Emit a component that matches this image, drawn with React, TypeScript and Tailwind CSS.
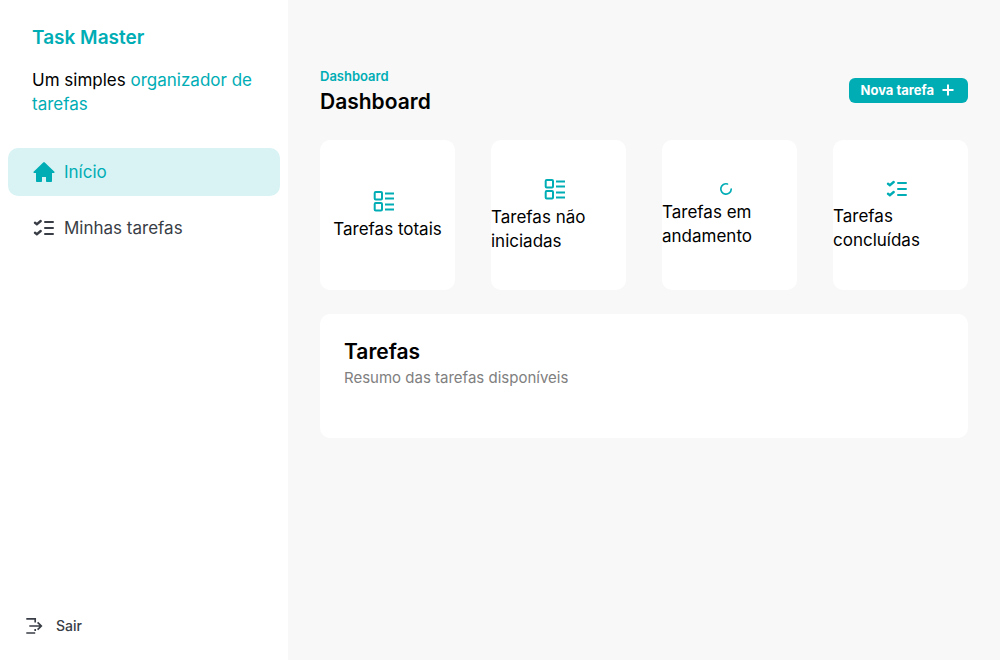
import type { ReactNode } from "react";

function HomeIcon() {
  return (
    <svg width="24" height="24" viewBox="0 0 24 24" fill="currentColor" aria-hidden="true">
      <path d="M11.200 2.400a1.200 1.200 0 0 1 1.600 0l9.600 9.400a.7.7 0 0 1-.5 1.200H20v8.300a.8.8 0 0 1-.8.8H14.800a.8.8 0 0 1-.8-.8V17h-4v4.300a.8.8 0 0 1-.8.8H4.800a.8.8 0 0 1-.8-.8V13H2.100a.7.7 0 0 1-.5-1.200z" />
    </svg>
  );
}

function ChecklistIcon() {
  return (
    <svg
      width="24"
      height="22"
      viewBox="0 0 24 22"
      fill="none"
      stroke="currentColor"
      strokeWidth="2"
      aria-hidden="true"
    >
      <path d="M13 5h8M13 11h8M13 17h8" strokeLinecap="round" />
      <path
        d="m3 5.700 1.900 1.500 3.800-3.200M3 15.700l1.900 1.500 3.800-3.200"
        strokeWidth="2.400"
        strokeLinecap="round"
      />
    </svg>
  );
}

function GridListIcon() {
  return (
    <svg
      width="24"
      height="24"
      viewBox="0 0 24 24"
      fill="none"
      stroke="currentColor"
      strokeWidth="2"
      aria-hidden="true"
    >
      <rect x="2.700" y="3" width="7.300" height="7.500" rx="1" />
      <rect x="2.700" y="14" width="7.300" height="7.500" rx="1" />
      <path d="M13 4.500h9M13 9.500h9M13 15.500h9M13 20.500h9" />
    </svg>
  );
}

function LoaderIcon() {
  return (
    <svg
      width="14"
      height="14"
      viewBox="0 0 14 14"
      fill="none"
      stroke="currentColor"
      strokeWidth="1.700"
      strokeLinecap="round"
      aria-hidden="true"
    >
      <path d="M8.500 2A5.200 5.200 0 1 0 12.200 7.200" />
    </svg>
  );
}

function ExitIcon() {
  return (
    <svg
      width="20"
      height="18"
      viewBox="0 0 20 18"
      fill="none"
      stroke="currentColor"
      strokeWidth="1.700"
      aria-hidden="true"
    >
      <path d="M2.300 1.800h8.900v3.700M11.200 12v2M2.300 16h8.900M5.300 9h12M13.600 5.300 17.300 9l-3.700 3.700" />
    </svg>
  );
}

function PlusIcon() {
  return (
    <svg width="12" height="12" viewBox="0 0 12 12" stroke="currentColor" strokeWidth="2" aria-hidden="true">
      <path d="M6 .500v11M.500 6h11" />
    </svg>
  );
}

function StatCard({ icon, label }: { icon: ReactNode; label: string }) {
  return (
    <article className="flex h-[150px] flex-col items-center justify-center gap-1 rounded-[10px] bg-white">
      <span className="pr-2 text-[#00adb5]">{icon}</span>
      <p>{label}</p>
    </article>
  );
}

export default function App() {
  return (
    <div className="flex min-h-screen bg-[#f8f8f8] font-['Inter',sans-serif] text-[17px] leading-6 text-black [&_svg]:block">
      <aside className="flex w-72 shrink-0 flex-col bg-white px-2 pt-6 pb-5">
        <div className="px-6">
          <p className="text-[19px] leading-7 font-semibold text-[#00adb5]">Task Master</p>
          <p className="mt-4">
            Um simples <span className="text-[#00adb5]">organizador de tarefas</span>
          </p>
        </div>
        <nav className="mt-8 flex flex-col gap-2">
          <a
            href="#inicio"
            aria-current="page"
            className="flex h-12 items-center gap-2 rounded-[10px] bg-[#d9f3f4] px-6 text-[#00adb5]"
          >
            <HomeIcon />
            Início
          </a>
          <a href="#tarefas" className="flex h-12 items-center gap-2 rounded-[10px] px-6 text-[#393e46]">
            <ChecklistIcon />
            Minhas tarefas
          </a>
        </nav>
        <button
          type="button"
          className="mt-auto flex h-7 items-center gap-3 self-start px-4 text-sm font-medium text-[#393e46]"
        >
          <ExitIcon />
          Sair
        </button>
      </aside>
      <main className="flex min-w-0 flex-1 flex-col gap-6 px-8 pt-[68px]">
        <header className="flex items-center justify-between">
          <div className="flex flex-col gap-1">
            <p className="text-[13px] leading-4 font-semibold text-[#00adb5]">Dashboard</p>
            <h1 className="text-[21px] leading-7 font-semibold">Dashboard</h1>
          </div>
          <button
            type="button"
            className="mb-1 flex h-[25px] items-center gap-2 rounded-md bg-[#00adb5] pr-[14px] pl-3 text-[13px] font-bold text-white"
          >
            Nova tarefa
            <PlusIcon />
          </button>
        </header>
        <section className="grid grid-cols-4 gap-9">
          <StatCard icon={<GridListIcon />} label="Tarefas totais" />
          <StatCard icon={<GridListIcon />} label="Tarefas não iniciadas" />
          <StatCard icon={<LoaderIcon />} label="Tarefas em andamento" />
          <StatCard icon={<ChecklistIcon />} label="Tarefas concluídas" />
        </section>
        <section className="min-h-[124px] rounded-[10px] bg-white p-6">
          <h2 className="text-[21px] leading-7 font-semibold">Tarefas</h2>
          <p className="text-[15px] leading-6 text-[#808080]">Resumo das tarefas disponíveis</p>
        </section>
      </main>
    </div>
  );
}
